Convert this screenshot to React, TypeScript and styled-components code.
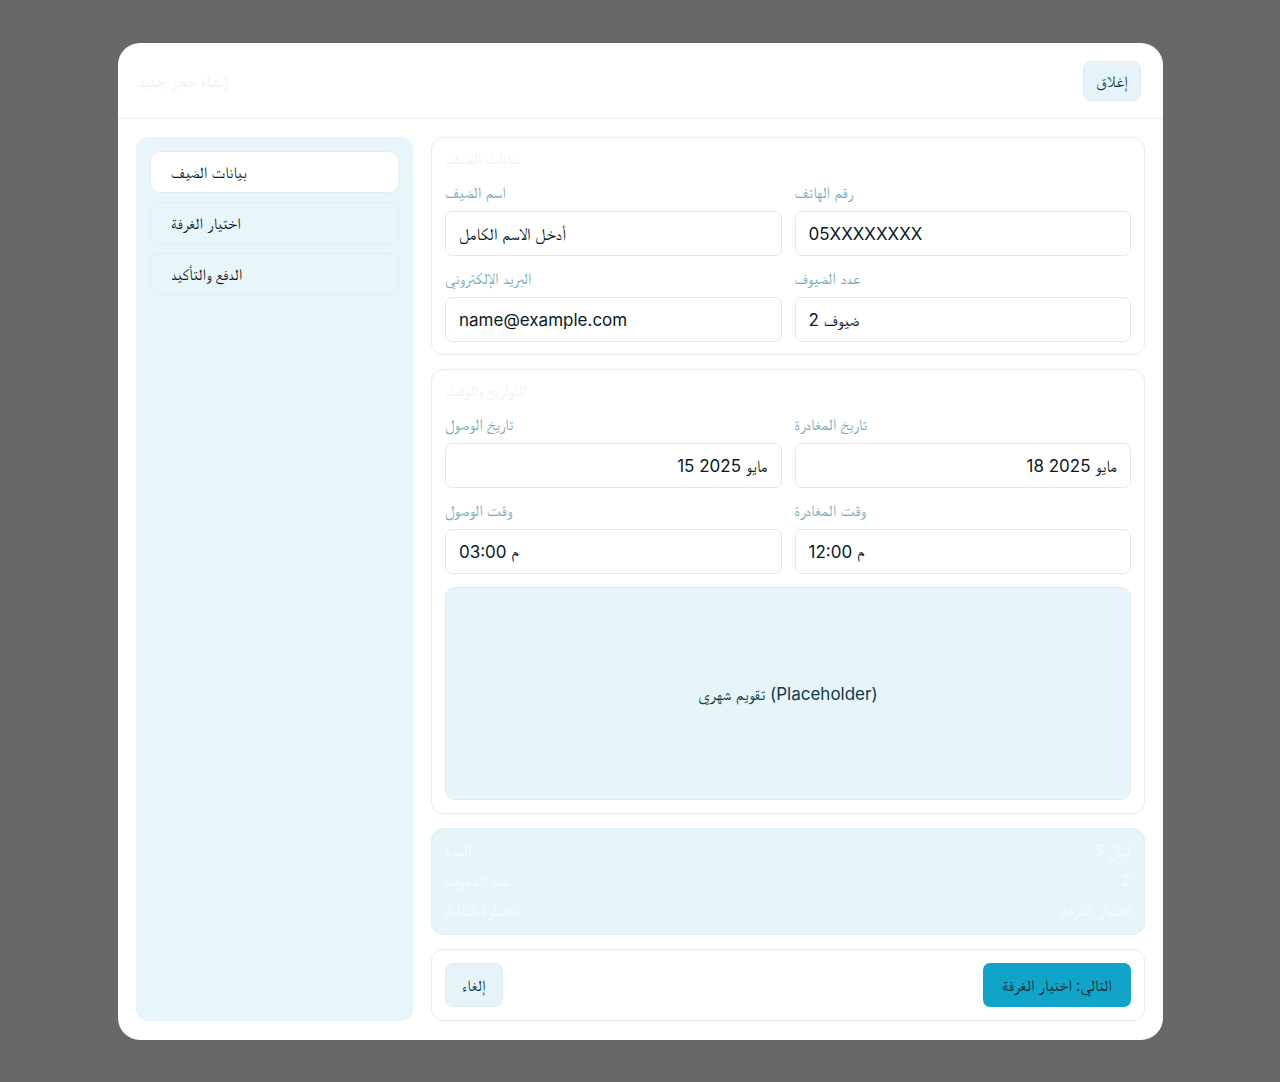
import React from "react";
import styled, { createGlobalStyle } from "styled-components";

const Global = createGlobalStyle`
  html, body { margin: 0; padding: 0; }
  body {
    background: #67686a;
    font-family: Inter, "FreeSerif", "Noto Naskh Arabic", serif;
    color: #0b2a33;
  }
  * { box-sizing: border-box; }
`;

const Page = styled.div`
  min-height: 1082px;
  display: flex;
  justify-content: center;
  padding-top: 43px;
  padding-left: 118px;
  padding-right: 117px;
`;

const Modal = styled.div`
  width: 1045px;
  height: 997px;
  background: #ffffff;
  border-radius: 22px;
  display: flex;
  flex-direction: column;
  overflow: hidden;
`;

const Header = styled.div`
  height: 76px;
  flex: none;
  display: flex;
  align-items: center;
  justify-content: space-between;
  padding: 0 22px 0 20px;
  border-bottom: 1px solid #e9eef0;
`;

const Title = styled.h2`
  margin: 0;
  font-size: 17px;
  font-weight: 500;
  color: #eef2f4;
`;

const SoftButton = styled.button<{ $h?: number }>`
  font-family: inherit;
  font-size: 16px;
  color: #0b3440;
  background: #e6f4fa;
  border: 1px solid #dcedf4;
  border-radius: 8px;
  height: ${(p) => p.$h ?? 40}px;
  min-width: 58px;
  padding: 0 12px;
  cursor: pointer;
`;

const Body = styled.div`
  flex: 1;
  display: grid;
  grid-template-columns: 277px 1fr;
  gap: 18px;
  padding: 18px 18px 19px 18px;
  min-height: 0;
`;

const Sidebar = styled.nav`
  background: #e8f5fb;
  border-radius: 12px;
  padding: 14px 14px;
  display: flex;
  flex-direction: column;
  gap: 9px;
`;

const NavItem = styled.div<{ $active?: boolean }>`
  height: 42px;
  display: flex;
  align-items: center;
  padding: 0 20px;
  font-size: 16px;
  color: #0a1d23;
  border-radius: 10px;
  background: ${(p) => (p.$active ? "#ffffff" : "transparent")};
  border: 1px solid ${(p) => (p.$active ? "#e4eef2" : "#e0eef4")};
`;

const Main = styled.div`
  display: flex;
  flex-direction: column;
  gap: 14px;
  min-height: 0;
`;

const Card = styled.section<{ $pb?: number }>`
  background: #ffffff;
  border: 1px solid #e6edf0;
  border-radius: 12px;
  padding: 9px 13px ${(p) => p.$pb ?? 12}px;
`;

const CardTitle = styled.h3`
  margin: 0 0 13px;
  font-size: 16px;
  font-weight: 500;
  color: #eff3f5;
  line-height: 22px;
`;

const Grid = styled.div`
  display: grid;
  grid-template-columns: 1fr 1fr;
  column-gap: 13px;
  row-gap: 12px;
`;

const Field = styled.label`
  display: flex;
  flex-direction: column;
  gap: 9px;
`;

const Label = styled.span`
  font-size: 16px;
  color: #78acbd;
  line-height: 20px;
`;

const Input = styled.input<{ $align?: "left" | "right" }>`
  height: 45px;
  width: 100%;
  border: 1px solid #e2e9ec;
  border-radius: 7px;
  padding: 0 13px;
  font-family: inherit;
  font-size: 17px;
  color: #0a1a1f;
  background: #fff;
  text-align: ${(p) => p.$align ?? "left"};
  outline: none;
`;

const CalendarBox = styled.div`
  margin-top: 13px;
  height: 213px;
  border-radius: 10px;
  background: #e7f5fb;
  border: 1px solid #dceef5;
  display: flex;
  align-items: center;
  justify-content: center;
  font-size: 17px;
  color: #0b3a48;
`;

const Summary = styled.div`
  background: #e7f5fb;
  border: 1px solid #e0f0f7;
  border-radius: 12px;
  padding: 11px 14px 14px 13px;
  display: flex;
  flex-direction: column;
  gap: 10px;
`;

const SummaryRow = styled.div`
  display: flex;
  justify-content: space-between;
  align-items: center;
  height: 20px;
  line-height: 20px;
  font-size: 16px;
  color: #f7fbfd;
`;

const Footer = styled.div`
  background: #fff;
  border: 1px solid #e6edf0;
  border-radius: 12px;
  padding: 13px;
  display: flex;
  justify-content: space-between;
  align-items: center;
`;

const PrimaryButton = styled.button`
  font-family: inherit;
  font-size: 16px;
  color: #072630;
  background: #10a5c8;
  border: none;
  border-radius: 7px;
  height: 44px;
  width: 148px;
  cursor: pointer;
`;

export default function App() {
  return (
    <>
      <Global />
      <Page>
        <Modal>
          <Header>
            <Title>إنشاء حجز جديد</Title>
            <SoftButton>إغلاق</SoftButton>
          </Header>
          <Body>
            <Sidebar>
              <NavItem $active>بيانات الضيف</NavItem>
              <NavItem>اختيار الغرفة</NavItem>
              <NavItem>الدفع والتأكيد</NavItem>
            </Sidebar>
            <Main>
              <Card>
                <CardTitle>بيانات الضيف</CardTitle>
                <Grid>
                  <Field>
                    <Label>اسم الضيف</Label>
                    <Input readOnly value="أدخل الاسم الكامل" />
                  </Field>
                  <Field>
                    <Label>رقم الهاتف</Label>
                    <Input readOnly value="05XXXXXXXX" />
                  </Field>
                  <Field>
                    <Label>البريد الإلكتروني</Label>
                    <Input readOnly value="name@example.com" />
                  </Field>
                  <Field>
                    <Label>عدد الضيوف</Label>
                    <Input readOnly value="2 ضيوف" />
                  </Field>
                </Grid>
              </Card>
              <Card $pb={13}>
                <CardTitle>التواريخ والوقت</CardTitle>
                <Grid>
                  <Field>
                    <Label>تاريخ الوصول</Label>
                    <Input readOnly $align="right" value="15 2025 مايو" />
                  </Field>
                  <Field>
                    <Label>تاريخ المغادرة</Label>
                    <Input readOnly $align="right" value="18 2025 مايو" />
                  </Field>
                  <Field>
                    <Label>وقت الوصول</Label>
                    <Input readOnly value="03:00 م" />
                  </Field>
                  <Field>
                    <Label>وقت المغادرة</Label>
                    <Input readOnly value="12:00 م" />
                  </Field>
                </Grid>
                <CalendarBox>تقويم شهري (Placeholder)</CalendarBox>
              </Card>
              <Summary>
                <SummaryRow>
                  <span>المدة</span>
                  <span>ليال 3</span>
                </SummaryRow>
                <SummaryRow>
                  <span>عدد الضيوف</span>
                  <span>2</span>
                </SummaryRow>
                <SummaryRow>
                  <span>الخطوة التالية</span>
                  <span>اختيار الغرفة</span>
                </SummaryRow>
              </Summary>
              <Footer>
                <SoftButton $h={44}>إلغاء</SoftButton>
                <PrimaryButton>التالي: اختيار الغرفة</PrimaryButton>
              </Footer>
            </Main>
          </Body>
        </Modal>
      </Page>
    </>
  );
}
